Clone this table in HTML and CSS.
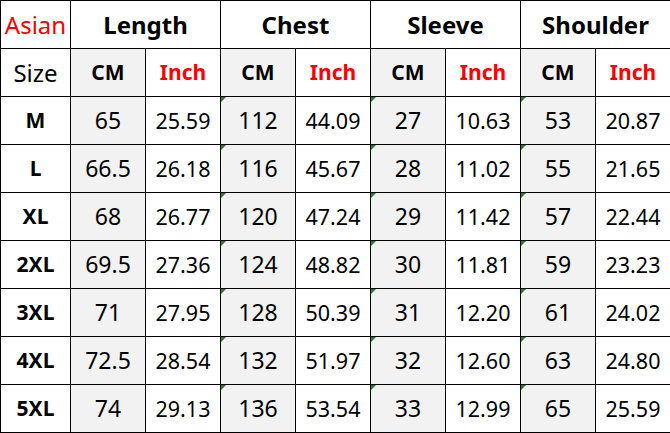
FILE: index.html
```
<!DOCTYPE html>
<html>
<head>
<meta charset="utf-8">
<link rel="stylesheet" href="styles.css">
</head>
<body>
<table class="size-table">
  <colgroup>
    <col class="c-first">
    <col class="c"><col class="c"><col class="c"><col class="c">
    <col class="c"><col class="c"><col class="c"><col class="c">
  </colgroup>
  <tr class="head">
    <td class="asian">Asian</td>
    <td colspan="2" class="group">Length</td>
    <td colspan="2" class="group">Chest</td>
    <td colspan="2" class="group">Sleeve</td>
    <td colspan="2" class="group">Shoulder</td>
  </tr>
  <tr class="units">
    <td class="size-label">Size</td>
    <td class="cm unit">CM</td><td class="inch unit">Inch</td>
    <td class="cm unit">CM</td><td class="inch unit">Inch</td>
    <td class="cm unit">CM</td><td class="inch unit">Inch</td>
    <td class="cm unit">CM</td><td class="inch unit">Inch</td>
  </tr>
  <tr>
    <td class="size">M</td>
    <td class="cm val">65</td><td class="in">25.59</td>
    <td class="cm val mark">112</td><td class="in">44.09</td>
    <td class="cm val mark">27</td><td class="in">10.63</td>
    <td class="cm val mark">53</td><td class="in">20.87</td>
  </tr>
  <tr>
    <td class="size">L</td>
    <td class="cm val">66.5</td><td class="in">26.18</td>
    <td class="cm val mark">116</td><td class="in">45.67</td>
    <td class="cm val mark">28</td><td class="in">11.02</td>
    <td class="cm val mark">55</td><td class="in">21.65</td>
  </tr>
  <tr>
    <td class="size">XL</td>
    <td class="cm val">68</td><td class="in">26.77</td>
    <td class="cm val mark">120</td><td class="in">47.24</td>
    <td class="cm val mark">29</td><td class="in">11.42</td>
    <td class="cm val mark">57</td><td class="in">22.44</td>
  </tr>
  <tr>
    <td class="size">2XL</td>
    <td class="cm val">69.5</td><td class="in">27.36</td>
    <td class="cm val mark">124</td><td class="in">48.82</td>
    <td class="cm val mark">30</td><td class="in">11.81</td>
    <td class="cm val mark">59</td><td class="in">23.23</td>
  </tr>
  <tr>
    <td class="size">3XL</td>
    <td class="cm val">71</td><td class="in">27.95</td>
    <td class="cm val mark">128</td><td class="in">50.39</td>
    <td class="cm val mark">31</td><td class="in">12.20</td>
    <td class="cm val mark">61</td><td class="in">24.02</td>
  </tr>
  <tr>
    <td class="size">4XL</td>
    <td class="cm val">72.5</td><td class="in">28.54</td>
    <td class="cm val mark">132</td><td class="in">51.97</td>
    <td class="cm val mark">32</td><td class="in">12.60</td>
    <td class="cm val mark">63</td><td class="in">24.80</td>
  </tr>
  <tr>
    <td class="size">5XL</td>
    <td class="cm val">74</td><td class="in">29.13</td>
    <td class="cm val mark">136</td><td class="in">53.54</td>
    <td class="cm val mark">33</td><td class="in">12.99</td>
    <td class="cm val mark">65</td><td class="in">25.59</td>
  </tr>
</table>
</body>
</html>
```
FILE: styles.css
```
html, body {
  margin: 0;
  padding: 0;
  background: #fff;
}

.size-table {
  border-collapse: collapse;
  table-layout: fixed;
  width: 670px;
  font-family: "Noto Sans", "Open Sans", sans-serif;
  color: #000;
}

.c-first { width: 70px; }
.c { width: 75px; }

.size-table tr { height: 48px; }

.size-table td {
  border: 1px solid #000;
  padding: 0;
  text-align: center;
  vertical-align: middle;
  line-height: 1;
  white-space: nowrap;
}

.asian {
  color: #f00;
  font-size: 24px;
}

.group {
  font-size: 24px;
  font-weight: 700;
}

.size-label {
  font-size: 24px;
}

.unit {
  font-size: 21px;
  font-weight: 700;
}

.inch { color: #f00; }

.cm { background: #f2f2f2; }

.val { font-size: 23px; }

.in { font-size: 21.5px; }

.size {
  font-size: 21px;
  font-weight: 700;
}

.mark { position: relative; }

.mark::before {
  content: "";
  position: absolute;
  top: 0;
  left: 0;
  width: 0;
  height: 0;
  border-top: 5px solid #1f801f;
  border-right: 5px solid transparent;
}
```
